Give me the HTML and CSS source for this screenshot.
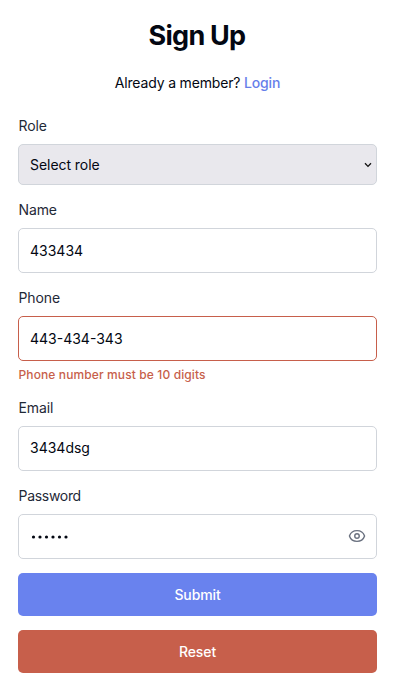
FILE: index.html
```html
<!DOCTYPE html>
<html lang="en">
<head>
<meta charset="utf-8">
<title>Sign Up</title>
<link rel="stylesheet" href="styles.css">
</head>
<body>
<form class="signup">
  <h1 class="title">Sign Up</h1>
  <p class="member">Already a member? <a class="login">Login</a></p>
  <label class="label">Role</label>
  <div class="field select"><span>Select role</span>
    <svg class="chevron" viewBox="0 0 8 6"><path d="M1 1.2 4 4.4 7 1.2"/></svg>
  </div>
  <label class="label">Name</label>
  <div class="field"><span>433434</span></div>
  <label class="label">Phone</label>
  <div class="field invalid"><span>443-434-343</span></div>
  <p class="error">Phone number must be 10 digits</p>
  <label class="label">Email</label>
  <div class="field email"><span>3434dsg</span></div>
  <label class="label password-label">Password</label>
  <div class="field password">
    <svg class="dots" viewBox="0 0 40 4"><circle cx="3.5" cy="2" r="1.6"/><circle cx="10" cy="2" r="1.6"/><circle cx="16.5" cy="2" r="1.6"/><circle cx="23" cy="2" r="1.6"/><circle cx="29.5" cy="2" r="1.6"/><circle cx="36" cy="2" r="1.6"/></svg>
    <svg class="eye" viewBox="0 0 24 24"><path d="M2.036 12.322a1.012 1.012 0 0 1 0-.639C3.423 7.51 7.36 4.5 12 4.5c4.638 0 8.573 3.007 9.963 7.178.07.207.07.431 0 .639C20.577 16.49 16.64 19.5 12 19.5c-4.638 0-8.573-3.007-9.963-7.178Z"/><path d="M15 12a3 3 0 1 1-6 0 3 3 0 0 1 6 0Z"/></svg>
  </div>
  <button class="button submit" type="button">Submit</button>
  <button class="button reset" type="button">Reset</button>
</form>
</body>
</html>
```
FILE: styles.css
```css
* { box-sizing: border-box; }
body { margin: 0; background: #fff; color: #030712; font-family: Inter, sans-serif; font-size: 14px; line-height: 20px; }
.signup { display: flex; flex-direction: column; width: 359px; margin-left: 18px; padding-top: 18px; }
.title { margin: 0; padding-right: 1px; font-size: 27px; line-height: 36px; font-weight: 700; letter-spacing: -0.75px; text-align: center; }
.member { margin: 19px 0 23px; text-align: center; letter-spacing: -0.17px; }
.login { color: #667eea; font-weight: 500; }
.label { height: 28px; padding-left: 0.5px; color: #1f2937; letter-spacing: -0.1px; }
.password-label { letter-spacing: -0.3px; }
.field { display: flex; align-items: center; justify-content: space-between; height: 45px; margin-bottom: 15px; padding: 0 11px; border: 1px solid #d1d5db; border-radius: 5px; }
.select { height: 41px; padding-right: 4px; background: #e9e8ed; letter-spacing: -0.05px; }
.invalid { margin-bottom: 4px; border-color: #c75f4b; }
.email { padding-bottom: 1px; }
.error { margin: 0 0 13px; padding-left: 0.5px; color: #c75f4b; font-size: 12px; font-weight: 500; letter-spacing: 0.12px; }
.password { margin-bottom: 14px; }
.chevron { width: 8px; height: 6px; fill: none; stroke: #111; stroke-width: 1.3; }
.dots { width: 40px; height: 4px; fill: #030712; }
.eye { width: 18px; height: 18px; margin: 0 -1px 1px 0; fill: none; stroke: #6b7280; stroke-width: 1.9; stroke-linecap: round; stroke-linejoin: round; }
.eye path:first-child { transform: translateY(0.6px) scaleY(0.95); }
.button { height: 43px; border: 0; border-radius: 5px; color: #fff; font: 500 14px/20px Inter, sans-serif; letter-spacing: -0.1px; }
.submit { margin-bottom: 14px; background: #6982ee; }
.reset { background: #c75f4b; }
```
